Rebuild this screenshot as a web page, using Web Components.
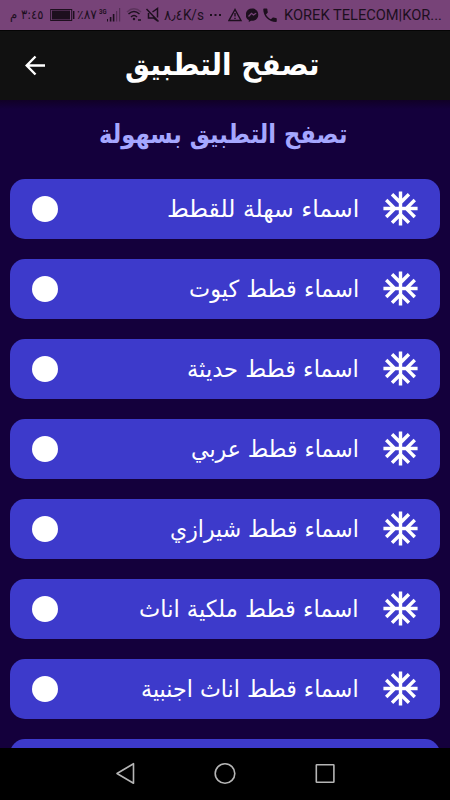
<!DOCTYPE html>
<html lang="ar"><head><meta charset="utf-8"><title>تصفح التطبيق</title>
<style>html,body{margin:0;height:100%;overflow:hidden;background:#14003c}</style></head><body>
<cat-app></cat-app>
<script>
class FitText extends HTMLElement{
  connectedCallback(){
    const w=+this.getAttribute('w'),dir=this.getAttribute('dir')||'rtl';
    const r=this.attachShadow({mode:'open'});
    r.innerHTML=`<style>:host{display:block;flex:none;width:${w}px;white-space:nowrap;direction:ltr}
    span{display:inline-block;transform-origin:0 50%;direction:${dir};unicode-bidi:isolate}</style><span><slot></slot></span>`;
    const s=r.querySelector('span');
    s.style.transform=`scaleX(${w/s.offsetWidth})`;
  }
}
customElements.define('fit-text',FitText);

class StatusBar extends HTMLElement{
  connectedCallback(){
    this.attachShadow({mode:'open'}).innerHTML=`<style>
    :host{display:block;height:30px;background:#774378;color:#1d0f1e;direction:ltr;font:14px/30px Roboto,"DejaVu Sans",sans-serif}
    .bar{display:flex;height:30px;align-items:center}
    svg{display:block;flex:none}
    .ar{font-family:"DejaVu Sans",sans-serif;font-size:13px}
    .g{font-size:8px;font-weight:700;line-height:8px;margin:0 0 7px 2px}
    </style><div class="bar">
    <fit-text class="ar" w="34" style="margin-left:10px">٣:٤٥ م</fit-text>
    <svg style="margin-left:6px" width="26" height="30"><rect x=".7" y="9.5" width="21" height="11" fill="none" stroke="#1d0f1e"/><rect x="2" y="10.500" width="18" height="9" fill="#1d0f1e"/><path d="M23.7 11v8" stroke="#1d0f1e" stroke-width="1.5"/></svg>
    <fit-text class="ar" w="20" dir="ltr" style="margin-left:1px">٪٨٧</fit-text>
    <fit-text class="g" w="7.5" dir="ltr">3G</fit-text>
    <svg width="14" height="30" fill="#1d0f1e"><path d="M0 19h1v2.500H0zM2.800 17h1.600v4.500H2.800zM5.800 14h1.600v7.500H5.800z"/><path d="M9 11h1.200v10.500H9zM12 8h1.200v13.500H12z" opacity=".4"/></svg>
    <svg style="margin-left:5px" width="17" height="30" fill="none" stroke="#1d0f1e" stroke-width="1.5"><path d="M1 12Q8 5.5 15 12" opacity=".3"/><path d="M2.5 14Q8 9 13.500 14M5 17Q8 14 11 17"/><circle cx="8" cy="19" r=".5"/><path d="M12 20h3"/></svg>
    <svg style="margin-left:2px" width="16" height="30" fill="none" stroke="#1d0f1e" stroke-width="1.5"><path d="M1.500 9l12 12.500M7.500 12 12.500 8.500v9M12.500 21 8.500 18H3.500v-5"/></svg>
    <fit-text w="39.500" dir="ltr" style="margin-left:3.500px">٨٫٤K/s</fit-text>
    <svg style="margin-left:6px" width="14" height="30" fill="#1d0f1e"><path d="M0 14h2v2H0zM4.500 14h2v2h-2zM9 14h2v2H9z"/></svg>
    <svg style="margin-left:4px" width="18" height="30" fill="none" stroke="#1d0f1e" stroke-width="1.4"><path d="M7 9.500 1 20.500h12zM7 13v3.500M7 17.700v1.300"/></svg>
    <svg width="15" height="30"><path d="M6.300 8.500c-8 0-8 10-3.500 11.500v2l2.200-1.200c9.500 1 9.500-12.300 1.300-12.300z" fill="#1d0f1e"/><path d="m2.500 16.500 3-3.200 2 1.600 2.700-1.600" fill="none" stroke="#774378" stroke-width="1.300"/></svg>
    <svg style="margin-left:2px" width="16" height="30"><path transform="translate(-2 6.300) scale(.75)" d="M6.620 10.790c1.440 2.830 3.760 5.140 6.590 6.590l2.200-2.200c.27-.27.67-.36 1.020-.24 1.120.37 2.330.57 3.570.57.55 0 1 .45 1 1V20c0 .55-.45 1-1 1-9.390 0-17-7.610-17-17 0-.55.45-1 1-1h3.500c.55 0 1 .45 1 1 0 1.250.2 2.450.57 3.570.11.35.03.74-.25 1.020z" fill="#1d0f1e"/></svg>
    <fit-text w="158" dir="ltr" style="margin-left:5px">KOREK TELECOM|KOR...</fit-text>
    </div>`;
  }
}
customElements.define('status-bar',StatusBar);

class AppHeader extends HTMLElement{
  connectedCallback(){
    this.attachShadow({mode:'open'}).innerHTML=`<style>
    :host{display:flex;align-items:center;height:70px;background:#111;color:#fff;border-top:1px solid #050505;box-sizing:border-box;direction:ltr;font:bold 30.5px/60px "DejaVu Sans",sans-serif}
    svg{margin-left:25px;flex:none}fit-text{margin:0 0 2px 79px}</style>
    <svg width="21" height="22" viewBox="0 0 21 22" fill="none" stroke="#fff" stroke-width="2.400"><path d="M20 10.500H2M10.500 1.500 1.700 10.500l8.800 9"/></svg>
    <fit-text w="195"><slot></slot></fit-text>`;
  }
}
customElements.define('app-header',AppHeader);

class CatRow extends HTMLElement{
  connectedCallback(){
    this.attachShadow({mode:'open'}).innerHTML=`<style>
    :host{display:flex;flex:none;align-items:center;direction:ltr;height:60px;border-radius:15px;background:#3d3acb;color:#fff;font:23.5px/56px "DejaVu Sans",sans-serif}
    i{width:26px;height:26px;border-radius:50%;background:#fff;margin-left:22px}
    fit-text{margin:1px 20.5px 0 auto}
    svg{margin-right:19.5px;flex:none}</style><i></i>
    <fit-text w="${this.getAttribute('w')}"><slot></slot></fit-text>
    <svg width="41" height="41" viewBox="0 0 24 24" fill="#fff"><path d="M22 11h-4.170l3.240-3.240-1.410-1.420L15 11h-2V9l4.660-4.660-1.420-1.410L13 6.170V2h-2v4.170L7.760 2.930 6.340 4.340 11 9v2H9L4.340 6.340 2.930 7.760 6.170 11H2v2h4.170l-3.240 3.240 1.410 1.420L9 13h2v2l-4.660 4.660 1.420 1.410L11 17.830V22h2v-4.170l3.240 3.240 1.420-1.410L13 15v-2h2l4.660 4.660 1.410-1.420L17.830 13H22z"/></svg>`;
  }
}
customElements.define('cat-row',CatRow);

class NavBar extends HTMLElement{
  connectedCallback(){
    this.attachShadow({mode:'open'}).innerHTML=`<style>
    :host{display:flex;flex:none;height:52px;align-items:center;justify-content:center;gap:76px;background:#000}</style>
    <svg width="24" height="24" fill="none" stroke="#b5b5b5" stroke-width="1.600" stroke-linejoin="round"><path d="M4 11.500 20.500 1.700v19.600z"/></svg>
    <svg width="24" height="24" fill="none" stroke="#b5b5b5" stroke-width="1.600"><circle cx="12" cy="11.500" r="9.800"/></svg>
    <svg width="24" height="24" fill="none" stroke="#b5b5b5" stroke-width="1.600"><rect x="3.300" y="2.700" width="17.600" height="17.600" rx=".5"/></svg>`;
  }
}
customElements.define('nav-bar',NavBar);

class CatApp extends HTMLElement{
  connectedCallback(){
    const rows=[['اسماء سهلة للقطط',192],['اسماء قطط كيوت',170],['اسماء قطط حديثة',172],['اسماء قطط عربي',168],['اسماء قطط شيرازي',189],['اسماء قطط ملكية اناث',220],['اسماء قطط اناث اجنبية',218]];
    this.attachShadow({mode:'open'}).innerHTML=`<style>
    :host{display:flex;flex-direction:column;width:450px;height:800px;overflow:hidden;background:#14003c}
    main{flex:1;min-height:0;overflow:hidden;display:flex;flex-direction:column;background:linear-gradient(#100026,#14003c 9px)}
    h2{margin:0;height:78.500px;flex:none;display:flex;justify-content:center;color:#a5a7ff;font:bold 26px/69px "DejaVu Sans",sans-serif}
    h2 fit-text{margin-right:5px}
    .list{display:flex;flex-direction:column;gap:20px;padding:0 10px}
    .next{flex:none;height:60px;border-radius:15px;background:#3d3acb}</style>
    <status-bar></status-bar><app-header>تصفح التطبيق</app-header>
    <main><h2><fit-text w="248">تصفح التطبيق بسهولة</fit-text></h2>
    <div class="list">${rows.map(([t,w])=>`<cat-row w="${w}">${t}</cat-row>`).join('')}<div class="next"></div></div></main><nav-bar></nav-bar>`;
  }
}
customElements.define('cat-app',CatApp);
</script></body></html>
